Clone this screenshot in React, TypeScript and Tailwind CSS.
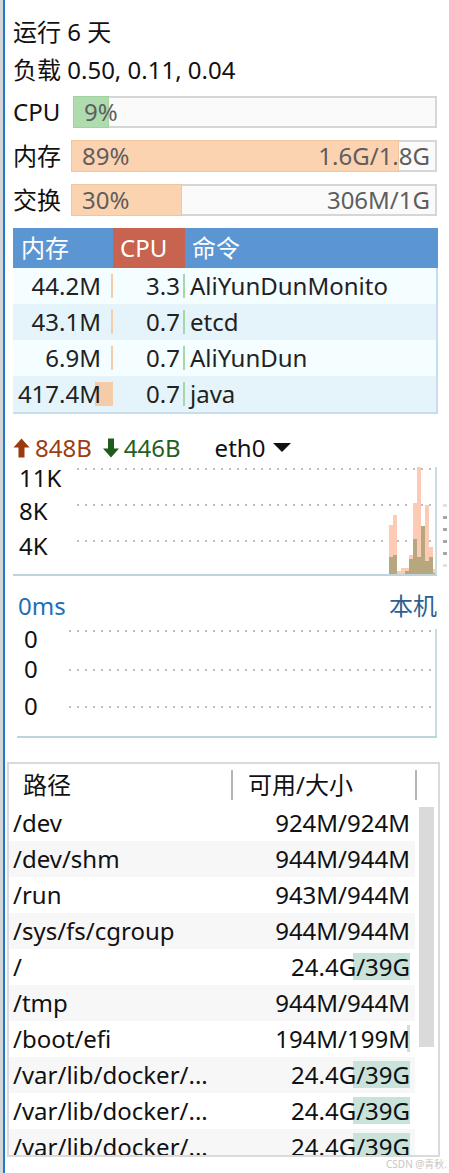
import React from 'react';

const font = "font-['Noto_Sans','Noto_Sans_CJK_SC',sans-serif]";

// process list rows
const procs = [
  { mem: '44.2M', memBar: 2, cpu: '3.3', cmd: 'AliYunDunMonito' },
  { mem: '43.1M', memBar: 2, cpu: '0.7', cmd: 'etcd' },
  { mem: '6.9M', memBar: 2, cpu: '0.7', cmd: 'AliYunDun' },
  { mem: '417.4M', memBar: 18, cpu: '0.7', cmd: 'java' },
];

// disk rows: path, avail/size, used bar width
const disks: [string, string, number][] = [
  ['/dev', '924M/924M', 0],
  ['/dev/shm', '944M/944M', 0],
  ['/run', '943M/944M', 0],
  ['/sys/fs/cgroup', '944M/944M', 0],
  ['/', '24.4G/39G', 57],
  ['/tmp', '944M/944M', 0],
  ['/boot/efi', '194M/199M', 3],
  ['/var/lib/docker/...', '24.4G/39G', 57],
  ['/var/lib/docker/...', '24.4G/39G', 57],
  ['/var/lib/docker/...', '24.4G/39G', 57],
];

// network samples: [upload height, download height]
const net = [
  [49, 17], [59, 19], [3, 0], [6, 0], [6, 3], [19, 15],
  [71, 35], [107, 17], [48, 48], [69, 13], [27, 17], [5, 1],
];

const UsageBar = ({ label, pct, left, right, fill, border, offset = 0 }: {
  label: string; pct: number; left: string; right?: string; fill: string; border: string; offset?: number;
}) => (
  <div className="flex items-center h-[32px]">
    <div className="w-[58px] text-[#111]">{label}</div>
    <div className="relative flex-1 h-[32px] border-2 border-[#d6d6d6] bg-[#fafafa]" style={{ marginLeft: offset }}>
      <div
        className="absolute -left-[2px] -top-[2px] -bottom-[2px] border"
        style={{ width: `calc(${pct}% + 2px)`, background: fill, borderColor: border }}
      />
      <div className="relative flex justify-between leading-[28px] pl-[9px] pr-[5px] text-[#5e5e5e]">
        <span>{left}</span>
        <span>{right}</span>
      </div>
    </div>
  </div>
);

const Dots = ({ y, x1, x2 }: { y: number; x1: number; x2: number }) => (
  <line x1={x1} x2={x2} y1={y} y2={y} stroke="#bdbdbd" strokeWidth={2} strokeDasharray="2 6" />
);

export default function App() {
  return (
    <div className={`${font} relative flex w-[449px] h-[1173px] overflow-hidden bg-white text-[24px]`}>
      <div className="w-[3px] bg-[#d6d6d6]" />
      <div className="w-[2px] bg-[#1e79d3]" />

      <div className="flex-1 flex flex-col">
        <div className="pl-[8px] pr-[11px] pt-[13px]">
          <div className="h-[38px] leading-[38px] text-[#111]">运行 6 天</div>
          <div className="h-[38px] leading-[38px] text-[#111]">负载 0.50, 0.11, 0.04</div>

          <div className="mt-[7px] flex flex-col gap-[12px] pr-[1px]">
            <UsageBar label="CPU" pct={9.5} left="9%" fill="#afdcaf" border="#a2d2a2" offset={2} />
            <UsageBar label="内存" pct={90} left="89%" right="1.6G/1.8G" fill="#fcd3b0" border="#f1c5a0" />
            <UsageBar label="交换" pct={30} left="30%" right="306M/1G" fill="#fcd3b0" border="#f1c5a0" />
          </div>

          {/* process table */}
          <div className="mt-[12px] w-[425px]">
            <div className="flex h-[40px] leading-[40px] bg-[#5b96d3] text-white">
              <div className="w-[100px] pl-[8px]">内存</div>
              <div className="w-[72px] pl-[7px] bg-[#c8634f]">CPU</div>
              <div className="flex-1 pl-[7px]">命令</div>
            </div>
            <div className="border-r-2 border-b-2 border-[#c6ddef]">
              {procs.map((p, i) => (
                <div key={i} className={`flex h-[36px] leading-[36px] text-[#222] ${i % 2 ? 'bg-[#e4f4fa]' : 'bg-[#f4fdff]'}`}>
                  <div className="relative w-[100px] text-right pr-[12px]">
                    <div className="absolute right-0 top-[6px] bottom-[6px] bg-[#f5cca8]" style={{ width: p.memBar }} />
                    <span className="relative">{p.mem}</span>
                  </div>
                  <div className="relative w-[72px] text-right pr-[5px]">
                    <div className="absolute right-0 top-[6px] bottom-[6px] w-[2px] bg-[#a4d8a8]" />
                    {p.cpu}
                  </div>
                  <div className="flex-1 pl-[5px]">{p.cmd}</div>
                </div>
              ))}
            </div>
          </div>

          {/* network */}
          <div className="mt-[16px] flex items-center h-[36px]">
            <svg width="17" height="20" viewBox="0 0 17 20" className="shrink-0">
              <path d="M8.5 0.5 L16.5 9.5 H11.5 V19.5 H5.5 V9.5 H0.5 Z" fill="#9c3a0f" />
            </svg>
            <span className="ml-[5px] text-[#9d3d10]">848B</span>
            <svg width="18" height="20" viewBox="0 0 18 20" className="ml-[10px] shrink-0">
              <path d="M9 19.5 L17 10.5 H12 V0.5 H6 V10.5 H1 Z" fill="#1f5b1a" />
            </svg>
            <span className="ml-[4px] text-[#245f1f]">446B</span>
            <span className="ml-[34px] text-[#111]">eth0</span>
            <svg width="18" height="10" viewBox="0 0 18 10" className="ml-[8px] shrink-0">
              <path d="M0 0 H18 L9 9 Z" fill="#111" />
            </svg>
          </div>

          <div className="relative w-[424px] h-[110px] border-b-2 border-[#bcd4dc]">
            <svg className="absolute inset-0" width="424" height="108">
              <Dots y={3} x1={64} x2={424} />
              <Dots y={39} x1={64} x2={424} />
              <Dots y={75} x1={64} x2={424} />
              {net.map(([up, down], i) => (
                <g key={i}>
                  <rect x={376 + i * 4} y={108 - up} width={4} height={up} fill="#fdcbb3" />
                  {down > 0 && <rect x={376 + i * 4} y={108 - down} width={4} height={down} fill="#b6a77f" />}
                </g>
              ))}
              <line x1={423} x2={423} y1={1} y2={108} stroke="#c9dde3" strokeWidth={2} />
            </svg>
            <span className="absolute left-[6px] top-0 leading-6 text-[#111]">11K</span>
            <span className="absolute left-[6px] top-[33px] leading-6 text-[#111]">8K</span>
            <span className="absolute left-[6px] top-[68px] leading-6 text-[#111]">4K</span>
          </div>

          {/* ping */}
          <div className="mt-[12px] ml-[5px] pr-[1px] flex justify-between h-[36px] leading-[36px]">
            <span className="text-[#1d6fb8]">0ms</span>
            <span className="text-[#2d5f8f]">本机</span>
          </div>
          <div className="relative mt-[5px] ml-[4px] w-[420px] h-[109px] border-b-2 border-[#bcd4dc]">
            <svg className="absolute inset-0" width="420" height="107">
              <Dots y={2} x1={52} x2={420} />
              <Dots y={41} x1={52} x2={420} />
              <Dots y={78} x1={52} x2={420} />
              <line x1={419} x2={419} y1={0} y2={107} stroke="#c9dde3" strokeWidth={2} />
            </svg>
            <span className="absolute left-[7px] -top-[2px] leading-6 text-[#111]">0</span>
            <span className="absolute left-[7px] top-[28px] leading-6 text-[#111]">0</span>
            <span className="absolute left-[7px] top-[65px] leading-6 text-[#111]">0</span>
          </div>
        </div>

        {/* disks */}
        <div className="mt-[24px] ml-[2px] w-[433px] h-[395px] border-2 border-[#dadada] flex flex-col overflow-hidden">
          <div className="flex h-[41px] shrink-0 items-center text-[#111]">
            <div className="w-[222px] pl-[14px]">路径</div>
            <div className="w-[2px] h-[30px] bg-[#b4b4b4]" />
            <div className="w-[182px] pl-[15px]">可用/大小</div>
            <div className="w-[2px] h-[30px] bg-[#b4b4b4]" />
          </div>
          <div className="flex min-h-0 flex-1 overflow-hidden">
            <div className="w-[406px]">
              {disks.map(([path, size, used], i) => (
                <div key={i} className={`flex justify-between h-[36px] leading-[36px] pl-[4px] pr-[5px] text-[#111] ${i % 2 ? 'bg-[#f7f7f7]' : ''}`}>
                  <span>{path}</span>
                  <span className="relative">
                    {used > 0 && <span className="absolute right-0 top-[4px] bottom-[5px] bg-[#c9e2da]" style={{ width: used }} />}
                    <span className="relative">{size}</span>
                  </span>
                </div>
              ))}
            </div>
            <div className="ml-[4px] mt-[2px] w-[15px] h-[240px] bg-[#dadada]" />
          </div>
        </div>
      </div>

      {/* resize grip */}
      <div className="absolute left-[443px] top-[504px] flex flex-col gap-[9px]">
        <div className="w-[4px] h-[3px] bg-[#e2e2e2]" />
        <div className="w-[4px] h-[3px] bg-[#a6a6a6]" />
        <div className="w-[4px] h-[3px] bg-[#a6a6a6]" />
        <div className="w-[4px] h-[3px] bg-[#a6a6a6]" />
        <div className="w-[4px] h-[3px] bg-[#a6a6a6]" />
        <div className="w-[4px] h-[3px] bg-[#e2e2e2]" />
      </div>

      <div className="absolute right-[2px] top-[1157px] text-[10px] leading-[14px] text-[#c6c6c6]">CSDN @青秋.</div>
    </div>
  );
}
